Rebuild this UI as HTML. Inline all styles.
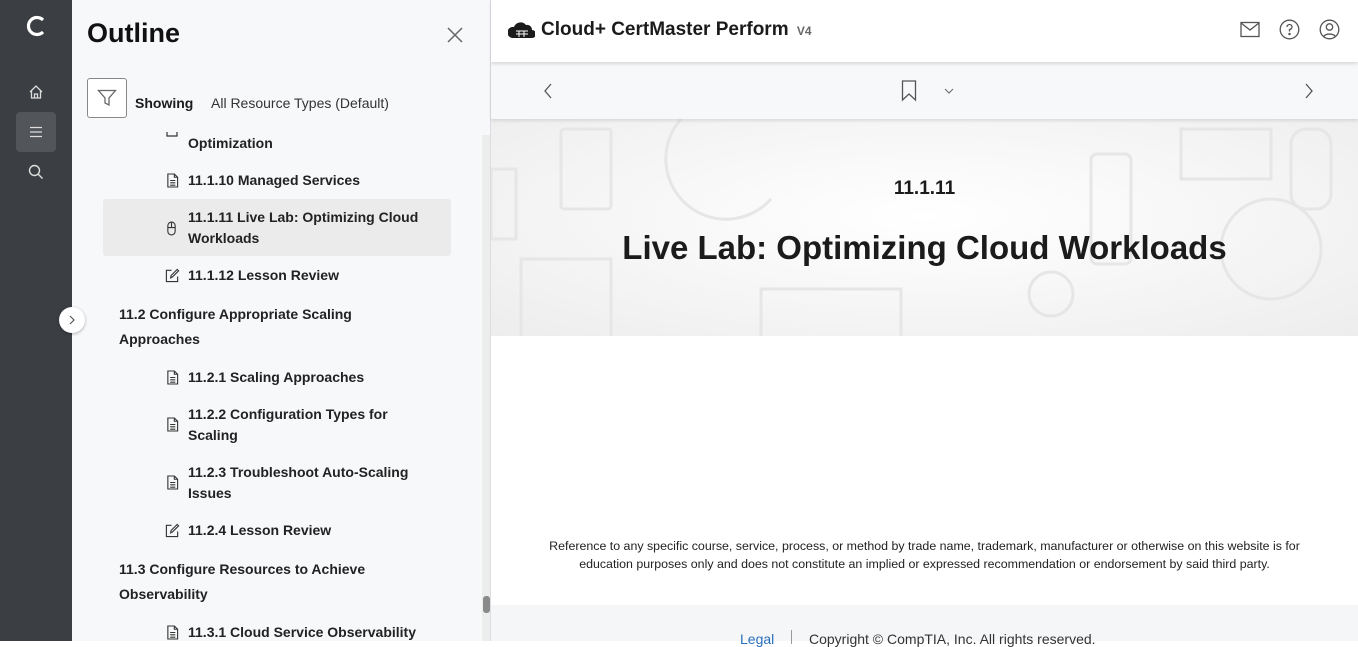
<!DOCTYPE html>
<html><head><style>
*{margin:0;padding:0;box-sizing:border-box}
body{width:1358px;height:641px;overflow:hidden;font-family:"Liberation Sans",sans-serif;color:#1b1b1b;background:#fff;position:relative}
.rail{position:absolute;left:0;top:0;width:72px;height:641px;background:#3b3e43}
.panel{position:absolute;left:72px;top:0;width:419px;height:641px;background:#f7f8fa;border-right:1px solid #dcdde0}
.abs{position:absolute}
.it{position:absolute;font-size:14px;font-weight:bold;color:#222;line-height:21px}
.sec{position:absolute;left:119px;font-size:14px;font-weight:bold;color:#222;line-height:25px}
.ic{position:absolute}
.main{position:absolute;left:491px;top:0;width:867px;height:641px}
</style></head><body>
<div class="rail">
  <svg class="abs" style="left:24px;top:15px" width="24" height="22" viewBox="0 0 24 22"><path d="M19 5 A8.5 8.5 0 1 0 19 17" fill="none" stroke="#fff" stroke-width="3.2"/></svg>
  <svg class="abs" style="left:28px;top:84px" width="16" height="16" viewBox="0 0 16 16" fill="none" stroke="#ddd" stroke-width="1.3"><path d="M2 8 L8 2 L14 8 M3.5 6.5 V14 H12.5 V6.5 M6.5 14 V10 H9.5 V14"/></svg>
  <div class="abs" style="left:16px;top:112px;width:40px;height:40px;background:#52555a;border-radius:4px"></div>
  <svg class="abs" style="left:29px;top:126px" width="14" height="12" viewBox="0 0 14 12" stroke="#ddd" stroke-width="1.3"><path d="M1 1.5H13M1 6H13M1 10.5H13"/></svg>
  <svg class="abs" style="left:27px;top:163px" width="18" height="18" viewBox="0 0 18 18" fill="none" stroke="#ddd" stroke-width="1.4"><circle cx="7.5" cy="7.5" r="5"/><path d="M11 11 L15.5 15.5"/></svg>
</div>
<div class="panel">
  <div class="abs" style="left:15px;top:18px;font-size:27px;font-weight:bold;color:#111">Outline</div>
  <svg class="abs" style="left:374px;top:26px" width="18" height="18" viewBox="0 0 18 18" stroke="#666" stroke-width="1.5"><path d="M2 2L16 16M16 2L2 16"/></svg>
  <div class="abs" style="left:15px;top:78px;width:40px;height:40px;border:1px solid #888;border-radius:3px;background:#fff"></div>
  <svg class="abs" style="left:25px;top:89px" width="20" height="18" viewBox="0 0 20 18" fill="none" stroke="#666" stroke-width="1.3"><path d="M1.5 1.5H18.5L12 9V16L8 14V9Z"/></svg>
  <div class="abs" style="left:63px;top:95px;font-size:14px;font-weight:bold">Showing</div>
  <div class="abs" style="left:139px;top:95px;font-size:14px;color:#333">All Resource Types (Default)</div>
  <div class="abs" style="left:31px;top:199px;width:348px;height:57px;background:#ebebec;border-radius:3px"></div>
  <div class="abs" style="left:410px;top:135px;width:8px;height:506px;background:#eceded"></div>
  <div class="abs" style="left:411px;top:596px;width:7px;height:17px;background:#8a8a8a;border-radius:3px"></div>
</div>
<div class="it" style="left:188px;top:133px">Optimization</div>
<svg class="ic" style="left:166px;top:132px" width="12" height="6"><path d="M1 0V4H11V0" fill="none" stroke="#333" stroke-width="1.2"/></svg>
<div class="it" style="left:188px;top:170px">11.1.10 Managed Services</div>
<div class="it" style="left:188px;top:207px">11.1.11 Live Lab: Optimizing Cloud<br>Workloads</div>
<div class="it" style="left:188px;top:265px">11.1.12 Lesson Review</div>
<div class="sec" style="top:302px">11.2 Configure Appropriate Scaling<br>Approaches</div>
<div class="it" style="left:188px;top:367px">11.2.1 Scaling Approaches</div>
<div class="it" style="left:188px;top:404px">11.2.2 Configuration Types for<br>Scaling</div>
<div class="it" style="left:188px;top:462px">11.2.3 Troubleshoot Auto-Scaling<br>Issues</div>
<div class="it" style="left:188px;top:520px">11.2.4 Lesson Review</div>
<div class="sec" style="top:557px">11.3 Configure Resources to Achieve<br>Observability</div>
<div class="it" style="left:188px;top:622px">11.3.1 Cloud Service Observability</div>
<svg width="0" height="0" style="position:absolute"><defs>
<symbol id="doc" viewBox="0 0 14 16"><path d="M2 1H9L12.5 4.5V15H2Z M9 1V4.5H12.5 M4.5 8H10 M4.5 10.5H10 M4.5 13H10" fill="none" stroke="#333" stroke-width="1.2"/></symbol>
<symbol id="edit" viewBox="0 0 16 16"><path d="M7 2.5H1.5V14.5H13.5V9 M6 10.5L6.5 8L13 1.5L14.5 3L8 9.5Z" fill="none" stroke="#333" stroke-width="1.2"/></symbol>
<symbol id="mouse" viewBox="0 0 12 16"><path d="M2 5A4 4 0 0 1 10 5V11A4 4 0 0 1 2 11Z M2 7H10 M6 1V7" fill="none" stroke="#333" stroke-width="1.2"/></symbol>
</defs></svg>
<svg class="ic" style="left:166px;top:173px" width="13" height="15"><use href="#doc"/></svg>
<svg class="ic" style="left:166px;top:221px" width="11" height="15"><use href="#mouse"/></svg>
<svg class="ic" style="left:165px;top:268px" width="15" height="15"><use href="#edit"/></svg>
<svg class="ic" style="left:166px;top:370px" width="13" height="15"><use href="#doc"/></svg>
<svg class="ic" style="left:166px;top:417px" width="13" height="15"><use href="#doc"/></svg>
<svg class="ic" style="left:166px;top:475px" width="13" height="15"><use href="#doc"/></svg>
<svg class="ic" style="left:165px;top:523px" width="15" height="15"><use href="#edit"/></svg>
<svg class="ic" style="left:166px;top:625px" width="13" height="15"><use href="#doc"/></svg>
<div class="abs" style="left:59px;top:307px;width:26px;height:26px;border-radius:50%;background:#fff;box-shadow:0 1px 3px rgba(0,0,0,.3)"></div>
<svg class="abs" style="left:68px;top:315px" width="8" height="10"><path d="M2 1L6 5L2 9" fill="none" stroke="#555" stroke-width="1.2"/></svg>

<div class="main">
  <div class="abs" style="left:0;top:0;width:867px;height:62px;background:#fff;box-shadow:0 2px 3px rgba(0,0,0,.12);z-index:2"></div>
  <svg class="abs" style="left:17px;top:19px;z-index:3" width="27" height="20" viewBox="0 0 27 20"><path d="M4 19H24A3 3 0 0 0 24 11A5 5 0 0 0 18 6A7 7 0 0 0 6 8A5 5 0 0 0 4 19Z" fill="#1b1b1b"/><path d="M8 12H20M8 15H20M11 12V18M16 12V18" stroke="#fff" stroke-width="1"/></svg>
  <div class="abs" style="left:50px;top:19px;font-size:19px;font-weight:bold;z-index:3;color:#1b1b1b">Cloud+ CertMaster Perform <span style="font-size:12px;color:#666;margin-left:3px">V4</span></div>
  <svg class="abs" style="left:749px;top:21px;z-index:3" width="20" height="17" viewBox="0 0 20 17" fill="none" stroke="#555" stroke-width="1.3"><rect x="1" y="1.5" width="18" height="14"/><path d="M1 2L10 9L19 2"/></svg>
  <svg class="abs" style="left:788px;top:19px;z-index:3" width="21" height="21" viewBox="0 0 21 21" fill="none" stroke="#555" stroke-width="1.3"><circle cx="10.5" cy="10.5" r="9.3"/><path d="M8 8A2.5 2.5 0 1 1 10.5 10.5V12.5"/><circle cx="10.5" cy="15" r=".6" fill="#555"/></svg>
  <svg class="abs" style="left:828px;top:19px;z-index:3" width="21" height="21" viewBox="0 0 21 21" fill="none" stroke="#555" stroke-width="1.3"><circle cx="10.5" cy="10.5" r="9.3"/><circle cx="10.5" cy="8" r="3.2"/><path d="M4.5 17.5A7 5 0 0 1 16.5 17.5"/></svg>
  <div class="abs" style="left:0;top:62px;width:867px;height:57px;background:#f7f8fa;box-shadow:0 2px 3px rgba(0,0,0,.1);z-index:1"></div>
  <svg class="abs" style="left:52px;top:83px;z-index:2" width="10" height="16"><path d="M8 1L2 8L8 15" fill="none" stroke="#555" stroke-width="1.3"/></svg>
  <svg class="abs" style="left:813px;top:83px;z-index:2" width="10" height="16"><path d="M2 1L8 8L2 15" fill="none" stroke="#555" stroke-width="1.3"/></svg>
  <svg class="abs" style="left:410px;top:80px;z-index:2" width="16" height="22"><path d="M1.5 1H14.5V20L8 14L1.5 20Z" fill="none" stroke="#555" stroke-width="1.3"/></svg>
  <svg class="abs" style="left:453px;top:88px;z-index:2" width="10" height="6"><path d="M1 1L5 5L9 1" fill="none" stroke="#666" stroke-width="1"/></svg>
  <div class="abs" style="left:0;top:119px;width:867px;height:217px;background:radial-gradient(ellipse at 50% 45%,#fff 0%,#f9f9f9 35%,#ededed 100%)"></div>
  <svg class="abs" style="left:0;top:119px" width="867" height="217" fill="none" stroke="#e6e6e6" stroke-width="3">
    <rect x="70" y="10" width="50" height="80" rx="3"/><path d="M190 0A60 60 0 0 0 280 80"/><rect x="30" y="140" width="90" height="80"/>
    <rect x="270" y="170" width="140" height="60"/><rect x="600" y="35" width="40" height="110" rx="6"/><circle cx="780" cy="130" r="50"/>
    <rect x="690" y="10" width="90" height="50"/><circle cx="560" cy="175" r="22"/>
    <rect x="800" y="10" width="40" height="80" rx="15"/><rect x="0" y="50" width="25" height="70"/>
  </svg>
  <div class="abs" style="left:0;top:178px;width:867px;text-align:center;font-size:19px;font-weight:bold">11.1.11</div>
  <div class="abs" style="left:0;top:229px;width:867px;text-align:center;font-size:33px;font-weight:bold;color:#1b1b1b">Live Lab: Optimizing Cloud Workloads</div>
  <div class="abs" style="left:0;top:537px;width:867px;text-align:center;font-size:12.4px;line-height:18px;color:#222">Reference to any specific course, service, process, or method by trade name, trademark, manufacturer or otherwise on this website is for<br>education purposes only and does not constitute an implied or expressed recommendation or endorsement by said third party.</div>
  <div class="abs" style="left:0;top:605px;width:867px;height:36px;background:#f5f6f8"></div>
  <div class="abs" style="left:249px;top:631px;font-size:14px;color:#2a6ebb">Legal</div>
  <div class="abs" style="left:300px;top:630px;width:1px;height:14px;background:#999"></div>
  <div class="abs" style="left:318px;top:631px;font-size:14px;color:#333">Copyright © CompTIA, Inc. All rights reserved.</div>
</div>
</body></html>
